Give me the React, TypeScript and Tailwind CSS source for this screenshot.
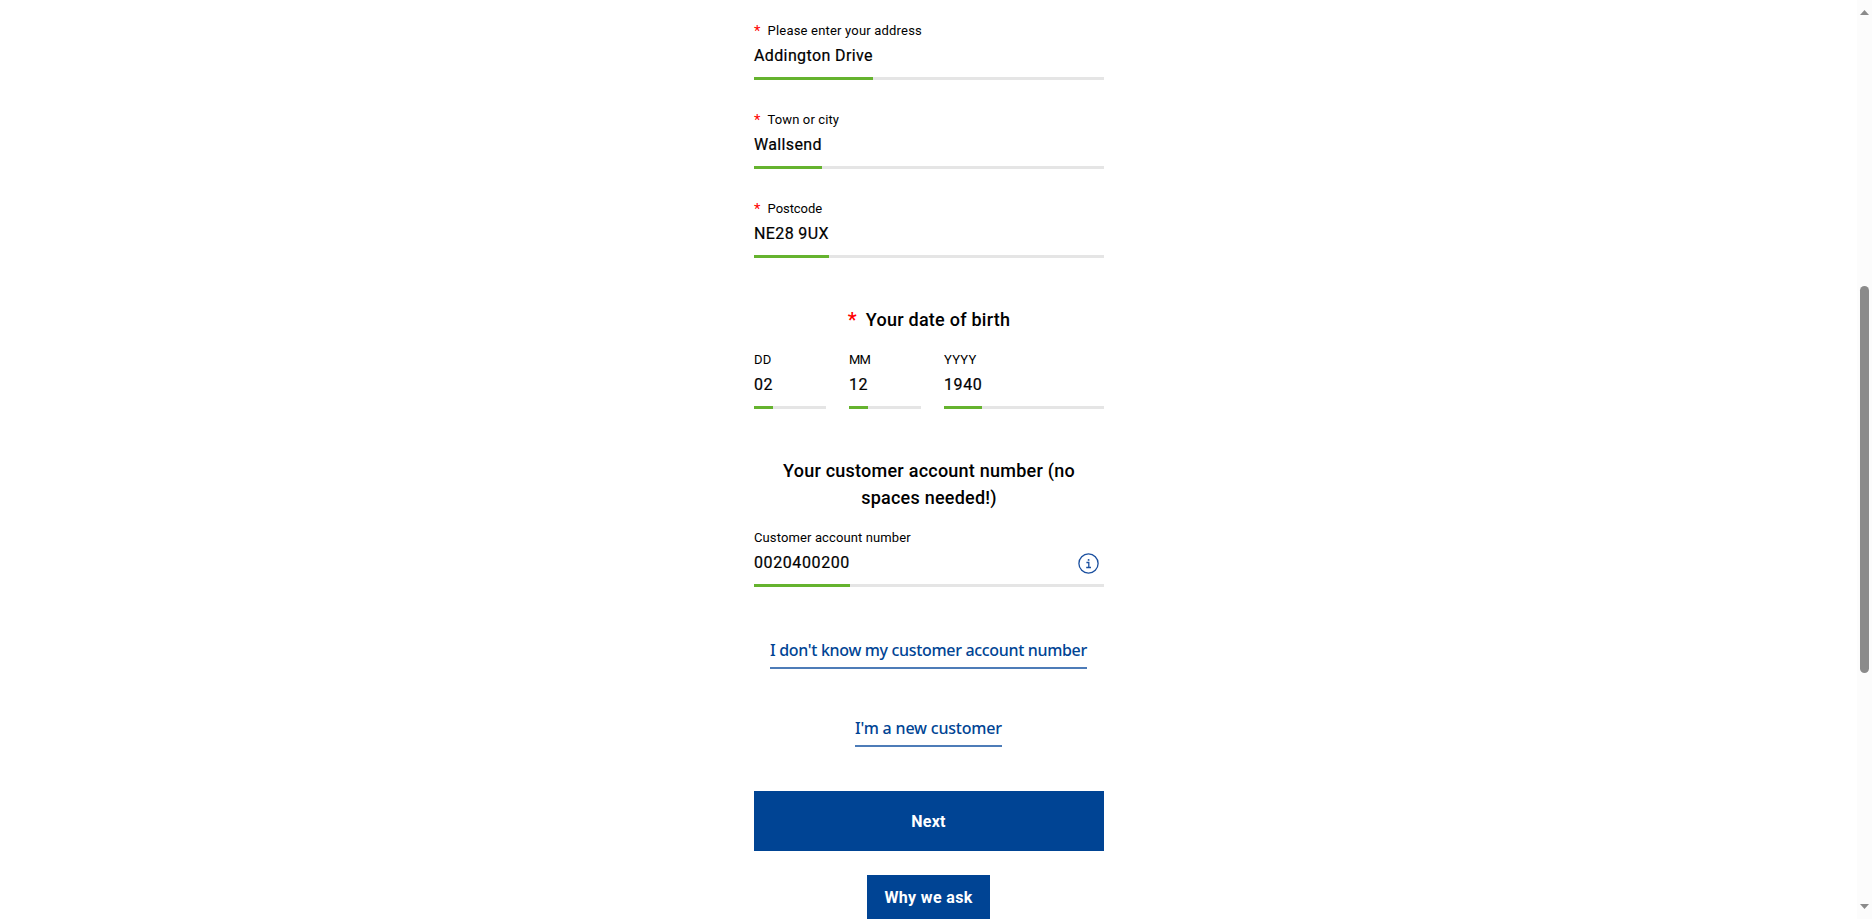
import type { ReactNode } from "react";

type FieldProps = {
  label: string;
  value: string;
  labelClass: string;
  valueClass: string;
  filled: string;
  required?: boolean;
  width?: string;
  children?: ReactNode;
};

function Field({ label, value, labelClass, valueClass, filled, required, width = "w-full", children }: FieldProps) {
  return (
    <div className={`flex h-[60px] flex-col ${width}`}>
      <label className="mt-px flex h-5 items-start text-[13px] leading-5 whitespace-nowrap">
        {required && <span className="w-[13.6px] shrink-0 text-[15px] leading-5 text-[#ff0000]">*</span>}
        <span className={labelClass}>{label}</span>
      </label>
      <div className="mt-[3px] flex h-6 items-center justify-between pr-[5px]">
        <span className={`text-base leading-6 whitespace-nowrap [-webkit-text-stroke:0.2px_black] ${valueClass}`}>{value}</span>
        {children}
      </div>
      <div className="mt-[9px] h-[3px] bg-[#e5e5e5]">
        <div className={`h-full bg-[#65b32e] ${filled}`} />
      </div>
    </div>
  );
}

function InfoIcon() {
  return (
    <svg width="21" height="21" viewBox="0 0 21 21" fill="none" stroke="#1a4f9f" className="shrink-0">
      <circle cx="10.5" cy="10.5" r="9.6" strokeWidth="1.3" />
      <path d="M8.4 9.5h2.4v5M8.2 14.5h4.8" strokeWidth="1.3" />
      <circle cx="10.6" cy="6.9" r="0.95" fill="#1a4f9f" stroke="none" />
    </svg>
  );
}

function Scrollbar() {
  return (
    <div className="flex h-full w-[15px] shrink-0 flex-col items-center bg-[#fcfcfc]">
      <svg width="9" height="5" viewBox="0 0 9 5" className="mt-2.5 shrink-0" fill="#8b8b8b">
        <path d="M4.5 0L9 5H0z" />
      </svg>
      <div className="mt-[271px] h-[387px] w-[9px] shrink-0 rounded-full bg-[#8b8b8b]" />
      <svg width="9" height="5" viewBox="0 0 9 5" className="mt-auto mb-2.5 shrink-0" fill="#8b8b8b">
        <path d="M4.5 5L0 0h9z" />
      </svg>
    </div>
  );
}

export default function App() {
  return (
    <div className="flex h-[919px] w-full overflow-hidden bg-white font-['Roboto',sans-serif] text-black">
      <main className="flex grow justify-center pl-px">
        <form className="flex w-[350px] flex-col pt-5">
          <div className="flex flex-col gap-[29px]">
            <Field required label="Please enter your address" value="Addington Drive" labelClass="tracking-[0.19px]" valueClass="tracking-[0.38px]" filled="w-[119px]" />
            <Field required label="Town or city" value="Wallsend" labelClass="tracking-[0.11px]" valueClass="tracking-[0.36px]" filled="w-[68px]" />
            <Field required label="Postcode" value="NE28 9UX" labelClass="tracking-[-0.06px]" valueClass="tracking-[0.38px]" filled="w-[75px]" />
          </div>

          <h2 className="mt-12 flex h-[27px] justify-center text-lg leading-[27px] font-medium tracking-[0.25px]">
            <span className="w-[18px] pt-px text-xl leading-[27px] text-[#ff0000]">*</span>
            Your date of birth
          </h2>
          <div className="mt-4 flex gap-[23px]">
            <Field label="DD" value="02" labelClass="tracking-[0.2px]" valueClass="tracking-[0.6px]" filled="w-[19px]" width="w-[72px]" />
            <Field label="MM" value="12" labelClass="tracking-[-0.8px]" valueClass="tracking-[0.6px]" filled="w-[19px]" width="w-[72px]" />
            <Field label="YYYY" value="1940" labelClass="tracking-[0.23px]" valueClass="tracking-[0.6px]" filled="w-[38px]" width="w-[160px]" />
          </div>

          <h2 className="mt-12 text-center text-lg leading-[27px] font-medium tracking-[0.24px]">
            Your customer account number (no
            <br />
            spaces needed!)
          </h2>
          <div className="mt-4">
            <Field label="Customer account number" value="0020400200" labelClass="tracking-[0.12px]" valueClass="tracking-[0.6px]" filled="w-[96px]">
              <InfoIcon />
            </Field>
          </div>

          <div className="mt-[51px] flex flex-col items-center gap-[47px] pr-px font-['Noto_Sans',sans-serif] leading-6 font-medium whitespace-nowrap text-[#004494]">
            <a className="h-[31px] w-[317px] border-b-2 border-[#4d7cb8] text-center tracking-[-0.33px]">I don't know my customer account number</a>
            <a className="h-[31px] w-[147px] border-b-2 border-[#4d7cb8] text-center tracking-[-0.19px]">I'm a new customer</a>
          </div>

          <button type="button" className="mt-11 h-[60px] shrink-0 bg-[#004494] pt-0.5 pr-px text-base font-bold tracking-[0.2px] text-white">
            Next
          </button>
          <div className="mt-6 flex shrink-0 justify-center pr-px">
            <button type="button" className="flex h-[52px] w-[123px] justify-center bg-[#004494] pt-[11px] text-base leading-6 font-bold tracking-[0.35px] whitespace-nowrap text-white">
              Why we ask
            </button>
          </div>
        </form>
      </main>
      <Scrollbar />
    </div>
  );
}
